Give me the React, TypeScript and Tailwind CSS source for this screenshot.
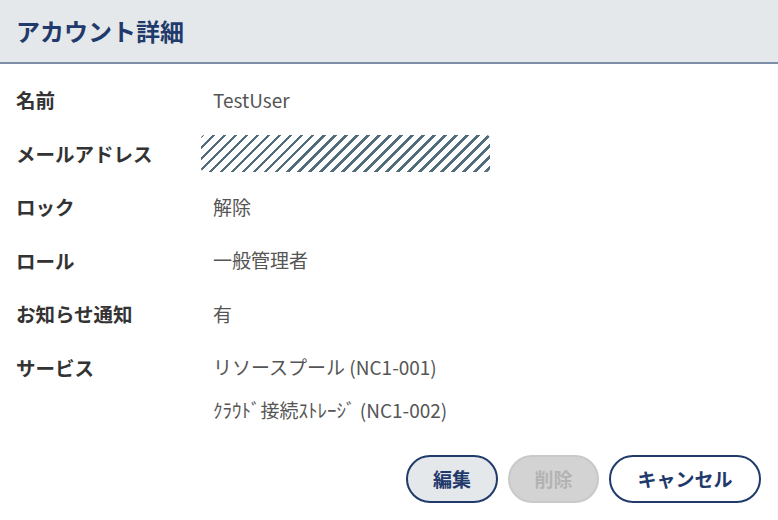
import React from "react";

const font = { fontFamily: '"Noto Sans CJK JP", "Noto Sans", sans-serif' };

function Row({ label, children }: { label: string; children: React.ReactNode }) {
  return (
    <div className="flex items-center h-[53.5px]">
      <div className="w-[185px] shrink-0 pl-4 text-[19.5px] font-bold text-[#333333]">{label}</div>
      <div className="flex-1 text-[19px] text-[#555555]">{children}</div>
    </div>
  );
}

export default function App() {
  return (
    <div className="w-[778px] h-[520px] bg-white overflow-hidden" style={font}>
      <div className="h-[64px] bg-[#e5e8ea] border-b-2 border-[#7f8ea8] flex items-center px-4">
        <h1 className="text-[24px] font-bold text-[#1f3a6b]">アカウント詳細</h1>
      </div>
      <div className="pt-[9px]">
        <Row label="名前"><span className="pl-7">TestUser</span></Row>
        <Row label="メールアドレス">
          <div className="ml-4 w-[289px] h-[37px] rounded-[4px] bg-[repeating-linear-gradient(135deg,#516c7a_0px,#516c7a_2.6px,#ffffff_2.6px,#ffffff_7.8px)]" />
        </Row>
        <Row label="ロック"><span className="pl-7">解除</span></Row>
        <Row label="ロール"><span className="pl-7">一般管理者</span></Row>
        <Row label="お知らせ通知"><span className="pl-7">有</span></Row>
        <div className="flex">
          <div className="w-[185px] shrink-0 pl-4 h-[53.5px] flex items-center text-[19.5px] font-bold text-[#333333]">サービス</div>
          <div className="flex-1 pl-7 text-[#555555] text-[19px]">
            <div className="h-[53.5px] flex items-center">リソースプール (NC1-001)</div>
            <div className="h-[32px] flex items-center">ｸﾗｳﾄﾞ接続ｽﾄﾚｰｼﾞ (NC1-002)</div>
          </div>
        </div>
      </div>
      <div className="flex justify-end gap-[10px] pr-[17px] mt-[29px]">
        <button className="w-[92px] h-[48px] rounded-full border-2 border-[#1f3a6b] bg-[#e5e8ea] text-[19px] font-bold text-[#1f3a6b]">編集</button>
        <button className="w-[91px] h-[48px] rounded-full border-2 border-[#c9c9c9] bg-[#d3d3d3] text-[19px] font-bold text-[#b3b3b3]">削除</button>
        <button className="w-[152px] h-[48px] rounded-full border-2 border-[#1f3a6b] bg-white text-[19px] font-bold text-[#1f3a6b]">キャンセル</button>
      </div>
    </div>
  );
}
